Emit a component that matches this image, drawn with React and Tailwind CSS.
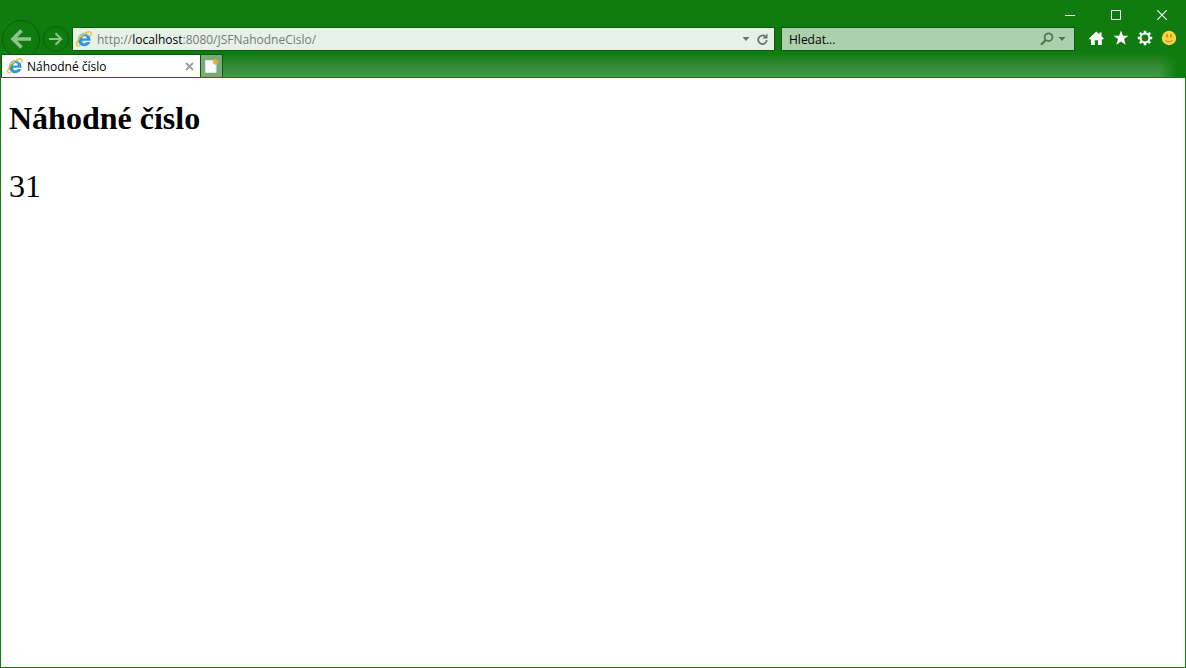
import React from "react";

function IeLogo() {
  return (
    <svg width="16" height="16" viewBox="0 0 16 16" fill="none" className="shrink-0" aria-hidden="true">
      <path
        d="M8.400 2.200c3.900 0 6.300 2.800 6.100 7.500H6.100c.1 1.700 1 2.600 2.500 2.600 1 0 1.700-.4 2.100-1.200h3.600c-.8 2.600-2.900 4.100-5.800 4.100-4 0-6.400-2.600-6.400-6.500 0-3.800 2.500-6.500 6.300-6.500zM6.200 7.400h4.600c-.2-1.500-1-2.300-2.300-2.300S6.400 5.900 6.200 7.400z"
        fill="#3397dc"
        fillRule="evenodd"
      />
      <path d="M3.200 6.300A5.600 5.600 0 0 1 12.800 4.900" stroke="#85cff5" strokeWidth="1.200" />
      <path
        d="M3.400 14.700C.5 15.900-.2 13.200 2 9.300 4.600 4.800 10.400.2 13.800.8c1.600.3 1.700 2 .8 3.700"
        stroke="#f5c02a"
        strokeWidth="1.400"
        strokeLinecap="round"
      />
    </svg>
  );
}

function Caret({ className }) {
  return (
    <svg width="8" height="4" viewBox="0 0 8 4" className={className} aria-hidden="true">
      <path d="M.5 0h7L4 4z" fill="currentColor" />
    </svg>
  );
}

function TitleBar() {
  return (
    <div className="flex h-[27px] shrink-0 items-center justify-end pt-[3px] pr-px">
      <button aria-label="Minimalizovat" className="flex h-5 w-[46px] items-center justify-center">
        <svg width="10" height="10" shapeRendering="crispEdges">
          <path d="M0 5h10v1H0z" fill="#fff" />
        </svg>
      </button>
      <button aria-label="Maximalizovat" className="flex h-5 w-[46px] items-center justify-center">
        <svg width="10" height="10" fill="none">
          <path d="M.5.5h9v9h-9z" stroke="#fff" />
        </svg>
      </button>
      <button aria-label="Zavřít" className="flex h-5 w-[46px] items-center justify-center">
        <svg width="10" height="10" fill="none">
          <path d="M.3.3l9.400 9.400M9.700.3L.3 9.700" stroke="#fff" strokeWidth="1.100" />
        </svg>
      </button>
    </div>
  );
}

function Toolbar() {
  return (
    <div className="flex h-6 shrink-0 items-center pr-[9px] pl-0.5">
      <button
        aria-label="Zpět"
        className="flex h-[38px] w-[38px] shrink-0 items-center justify-center rounded-full border border-[#0b5f0b]"
      >
        <svg width="22" height="20" viewBox="0 0 22 20" fill="none">
          <path d="M21 10H3M11.500 1.500L3 10l8.500 8.500" stroke="#8cc48c" strokeWidth="3.600" />
        </svg>
      </button>
      <button
        aria-label="Vpřed"
        className="ml-[3px] flex h-[26px] w-[26px] shrink-0 items-center justify-center rounded-full border border-[#0b5f0b]"
      >
        <svg width="14" height="14" viewBox="0 0 14 14" fill="none">
          <path d="M0 7h12M6.500 1.300L12.200 7l-5.700 5.700" stroke="#8cc48c" strokeWidth="2" />
        </svg>
      </button>
      <div className="ml-[3px] flex h-6 min-w-0 flex-1 items-center border border-[#0a5c0a] bg-[#e7f2e7] pr-[5px] pl-[3px]">
        <IeLogo />
        <a href="#url" className="ml-[5px] min-w-0 flex-1 truncate pt-0.5 text-[12px] leading-4 text-[#757b75]">
          http://<span className="text-black">localhost</span>:8080/JSFNahodneCislo/
        </a>
        <button aria-label="Zobrazit historii adres" className="mr-1.5 text-[#6c746c]">
          <Caret className="block" />
        </button>
        <button aria-label="Obnovit">
          <svg width="13" height="13" viewBox="0 0 13 13" fill="none" className="block">
            <path d="M10.800 7.200A4.300 4.300 0 1 1 9.200 3.400" stroke="#6c746c" strokeWidth="1.800" />
            <path d="M11.500.5v5H6.500z" fill="#6c746c" />
          </svg>
        </button>
      </div>
      <div className="ml-1.5 flex h-6 w-[294px] shrink-0 items-center border border-[#0a5c0a] bg-[#abd1ab] pr-2 pl-[7px]">
        <input
          type="text"
          aria-label="Hledat"
          placeholder="Hledat..."
          className="min-w-0 flex-1 bg-transparent pt-0.5 text-[12px] leading-4 text-black outline-none placeholder:text-black"
        />
        <button aria-label="Spustit hledání">
          <svg width="14" height="14" viewBox="0 0 14 14" fill="none" className="block">
            <circle cx="8.500" cy="5.200" r="3.900" stroke="#52705a" strokeWidth="1.800" />
            <path d="M5.800 8L1 12.800" stroke="#52705a" strokeWidth="2.200" />
          </svg>
        </button>
        <button aria-label="Možnosti hledání" className="ml-1 text-[#4e6c4e]">
          <Caret className="block" />
        </button>
      </div>
      <div className="ml-3.5 flex shrink-0 items-center gap-2 pb-0.5">
        <button aria-label="Domů">
          <svg width="16" height="16" viewBox="0 0 16 16" className="block">
            <path
              d="M7.300 1.500L10.500 4.500V2.500h2v3.800l2.300 2.200-1.100 1.200-.9-.8V15H9v-4.700H5.900V15H2V8.900l-.9.800L0 8.500z"
              fill="#fff"
            />
          </svg>
        </button>
        <button aria-label="Oblíbené">
          <svg width="16" height="16" viewBox="0 0 16 16" className="block">
            <path d="M8 .5l1.900 5.200h5.600L11 9.100l1.700 5.700L8 11.400l-4.700 3.400L5 9.100.5 5.700h5.600z" fill="#fff" />
          </svg>
        </button>
        <button aria-label="Nástroje">
          <svg width="16" height="16" viewBox="0 0 16 16" fill="none" className="block">
            <circle cx="8" cy="8" r="4.400" stroke="#fff" strokeWidth="2" />
            <path
              d="M8 .8v2.700M8 12.500v2.700M.8 8h2.700M12.500 8h2.700M2.900 2.900l1.900 1.900M11.200 11.200l1.900 1.900M13.100 2.900l-1.900 1.900M4.800 11.200l-1.900 1.900"
              stroke="#fff"
              strokeWidth="2.500"
            />
          </svg>
        </button>
        <button aria-label="Odeslat zpětnou vazbu">
          <svg width="16" height="16" viewBox="0 0 16 16" fill="none" className="block">
            <circle cx="8" cy="8" r="7.200" fill="#fcd440" />
            <path d="M6 4v3.500M10 4v3.500" stroke="#a37d23" strokeWidth="1.300" />
            <path d="M4.200 10c1.600 2.400 6 2.400 7.600 0" stroke="#b58d2a" strokeWidth="1" />
          </svg>
        </button>
      </div>
    </div>
  );
}

function TabBar() {
  return (
    <div className="relative z-10 mt-[3px] flex h-6 shrink-0 border-b border-[#107c10] pl-px">
      <div className="flex w-[200px] shrink-0 items-center border-x border-t border-[#0a5c0a] bg-white pr-1.5 pl-[5px]">
        <IeLogo />
        <span className="ml-1 flex-1 truncate pt-0.5 text-[12px] leading-4 text-black">Náhodné číslo</span>
        <button aria-label="Zavřít kartu">
          <svg width="9" height="9" viewBox="0 0 9 9" fill="none" className="block">
            <path d="M1 1l7 7M8 1L1 8" stroke="#a0a0a0" strokeWidth="2" />
          </svg>
        </button>
      </div>
      <button
        aria-label="Nová karta"
        className="flex w-[22px] shrink-0 items-center justify-center border-t border-r border-[#0a5c0a] bg-[#79aa79]"
      >
        <svg width="14" height="16" viewBox="0 0 14 16" fill="none">
          <path d="M.5 2.500h7.500l3 3v9H.5z" fill="#fafafa" stroke="#e4e4e4" />
          <path d="M10.500 .8v6M7.500 3.800h6M8.500 1.800l4 4M12.500 1.800l-4 4" stroke="#f5a93c" strokeWidth="1.300" />
        </svg>
      </button>
      <div className="mr-2 flex-1 bg-linear-to-b from-[#107c10] to-[#4c964c] mask-r-from-98% mask-r-to-100%" />
    </div>
  );
}

export default function App() {
  return (
    <div className="flex min-h-screen flex-col bg-[#107c10] font-['Open_Sans',sans-serif]">
      <header className="flex flex-col">
        <TitleBar />
        <Toolbar />
        <TabBar />
      </header>
      <main className="mx-px mb-px flex-1 bg-white px-2 pt-5 font-['Liberation_Serif',serif] text-[32px] leading-10 text-black">
        <h1 className="font-bold">Náhodné číslo</h1>
        <p className="mt-7">31</p>
      </main>
    </div>
  );
}
